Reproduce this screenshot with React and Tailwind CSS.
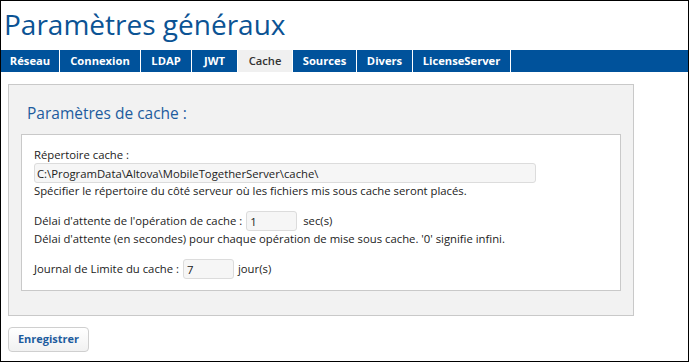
import { useState } from "react";

const TABS = [
  { label: "Réseau", w: "w-[59px]" },
  { label: "Connexion", w: "w-[81px]" },
  { label: "LDAP", w: "w-[51px]" },
  { label: "JWT", w: "w-[46px]" },
  { label: "Cache", w: "w-[55px]" },
  { label: "Sources", w: "w-[64px]" },
  { label: "Divers", w: "w-[56px]" },
  { label: "LicenseServer", w: "w-[98px]" },
];

const font = { fontFamily: '"Open Sans", "Noto Sans", sans-serif' };

function Tab({ label, w, active }) {
  return (
    <div
      className={
        "flex h-full shrink-0 items-center justify-center border-r border-white text-[11.2px] " +
        w +
        (active ? " bg-[#f0f0f0] font-semibold text-[#333]" : " font-bold text-white")
      }
    >
      {label}
    </div>
  );
}

export default function App() {
  const [dir, setDir] = useState("C:\\ProgramData\\Altova\\MobileTogetherServer\\cache\\");
  const [timeout, setTimeoutVal] = useState("1");
  const [days, setDays] = useState("7");

  return (
    <div
      className="box-border h-[362px] w-[689px] overflow-hidden border border-black bg-white text-[11.3px] text-[#222]"
      style={font}
    >
      <h1 className="ml-[3px] mt-[1px] h-[48px] text-[28px] leading-[44px] text-[#0b5394]">
        Paramètres généraux
      </h1>

      <nav className="flex h-[22px] bg-[#00529b]">
        {TABS.map((t) => (
          <Tab key={t.label} label={t.label} w={t.w} active={t.label === "Cache"} />
        ))}
      </nav>

      <div className="ml-[7px] mt-[12px] w-[626px] border border-[#c9c9c9] bg-[#f2f2f2] px-[12px] pb-[24px] pt-[16px]">
        <h2 className="mb-[9px] pl-[6px] text-[15.5px] leading-[24px] text-[#1d5c9e]">Paramètres de cache :</h2>

        <div className="border border-[#c9c9c9] bg-white px-[12px] pb-[11px] pt-[12px] leading-[16px]">
          <div>Répertoire cache :</div>
          <input
            value={dir}
            onChange={(e) => setDir(e.target.value)}
            className="block h-[20px] w-[502px] rounded-[3px] border border-[#dcdcdc] bg-[#f6f6f6] px-[2px] text-[11.3px] text-[#222] outline-none"
          />
          <div>Spécifier le répertoire du côté serveur où les fichiers mis sous cache seront placés.</div>

          <div className="mt-[12px] flex items-center">
            <span>Délai d'attente de l'opération de cache :</span>
            <input
              value={timeout}
              onChange={(e) => setTimeoutVal(e.target.value)}
              className="ml-[4px] h-[20px] w-[51px] rounded-[3px] border border-[#dcdcdc] bg-[#f6f6f6] px-[3px] text-[11.3px] text-[#222] outline-none"
            />
            <span className="ml-[6px]">sec(s)</span>
          </div>
          <div>Délai d'attente (en secondes) pour chaque opération de mise sous cache. '0' signifie infini.</div>

          <div className="mt-[12px] flex items-center">
            <span>Journal de Limite du cache :</span>
            <input
              value={days}
              onChange={(e) => setDays(e.target.value)}
              className="ml-[4px] h-[20px] w-[51px] rounded-[3px] border border-[#dcdcdc] bg-[#f6f6f6] px-[3px] text-[11.3px] text-[#222] outline-none"
            />
            <span className="ml-[4px]">jour(s)</span>
          </div>
        </div>
      </div>

      <button className="ml-[7px] mt-[11px] h-[25px] w-[81px] rounded-[4px] border border-[#cfcfcf] bg-gradient-to-b from-white to-[#f1f1f1] text-[11px] font-bold text-[#1d5c9e]">
        Enregistrer
      </button>
    </div>
  );
}
